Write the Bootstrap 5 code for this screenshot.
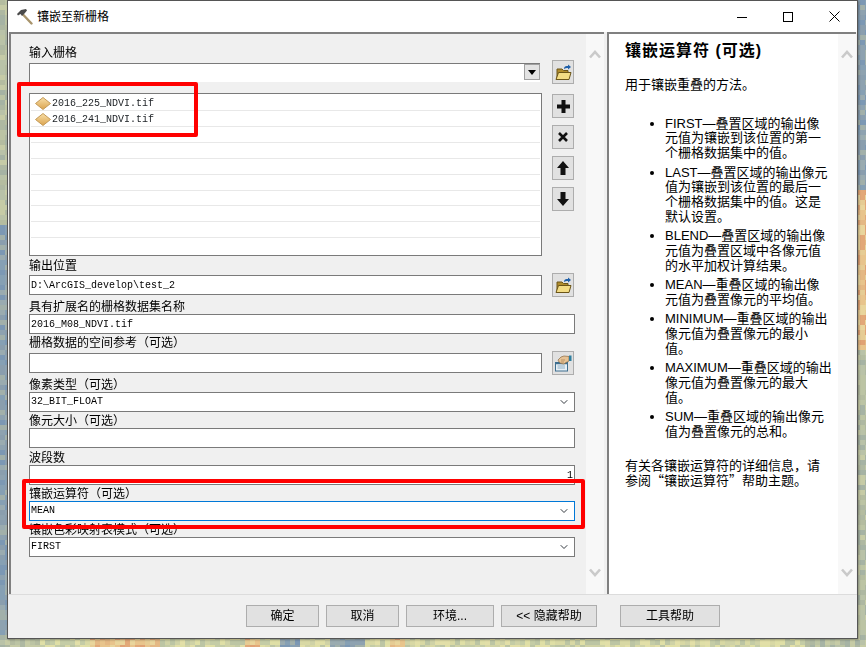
<!DOCTYPE html>
<html lang="zh-CN">
<head>
    <meta charset="UTF-8">
    <meta name="viewport" content="width=device-width, initial-scale=1.0">
    <title>镶嵌至新栅格</title>
    <link href="https://cdn.jsdelivr.net/npm/bootstrap@5.3.0/dist/css/bootstrap.min.css" rel="stylesheet">
    <style>
        body {
            margin: 0;
            height: 647px;
            overflow: hidden;
            background-color: #a9b3a0;
            font-family: "Liberation Sans", "Noto Sans CJK SC", sans-serif;
            font-size: 12px;
            color: #000;
        }
        #desktop {
            position: absolute;
            left: 0;
            top: 0;
        }
        .tool-window {
            position: absolute;
            left: 7px;
            top: 0;
            width: 851px;
            height: 639px;
            background-color: #f0f0f0;
            border: 1px solid #555;
            box-shadow: 1px 1px 2px rgba(0,0,0,0.3);
        }
        .title-bar {
            height: 31px;
            background-color: #fff;
            padding-left: 8px;
        }
        .title-text {
            margin-left: 4px;
            font-size: 12px;
        }
        .caption-btn {
            width: 46px;
            height: 31px;
        }
        .panes {
            height: 563px;
            padding-left: 1px;
            border-bottom: 1px solid #dcdcdc;
        }
        .form-pane {
            width: 595px;
            border-left: 2px solid #808080;
            border-top: 2px solid #808080;
        }
        .help-pane {
            width: 249px;
            margin-left: 3px;
            border-left: 2px solid #808080;
            border-top: 2px solid #808080;
            background-color: #fff;
        }
        .form-body {
            width: 546px;
            margin-left: 18px;
            padding-top: 12px;
        }
        .scroll-strip {
            width: 18px;
            background-color: #f8f8f8;
            padding: 16px 0 17px;
        }
        .field-label {
            height: 14px;
            line-height: 15px;
            white-space: nowrap;
        }
        .field-gap {
            margin-top: 2px;
        }
        .field-gap-wide {
            margin-top: 3px;
        }
        .row-drop {
            margin-top: 1px;
        }
        .form-control.field-box,
        .form-select.field-box {
            height: 20px;
            min-height: 0;
            padding: 0 1px;
            border-radius: 0;
            border-color: #7a7a7a;
            font-family: "Liberation Mono", monospace;
            font-size: 10px;
            line-height: 18px;
            color: #000;
            box-shadow: none;
        }
        .form-select.field-box {
            background-position: right 5px center;
            background-size: 10px 8px;
        }
        .form-select.field-active {
            border-color: #0078d7;
        }
        .combo-box {
            height: 19px;
            width: 511px;
            margin-top: 3px;
            background-color: #fff;
            border-top: 1px solid #7a7a7a;
            border-left: 1px solid #7a7a7a;
        }
        .combo-arrow {
            width: 16px;
            height: 16px;
            background-color: #e3e3e3;
            border: 1px solid #a0a0a0;
        }
        .combo-arrow::after {
            content: "";
            border-left: 4px solid transparent;
            border-right: 4px solid transparent;
            border-top: 5px solid #000;
        }
        .input-col {
            width: 513px;
        }
        .icon-btn {
            width: 22px;
            height: 24px;
            margin-right: 1px;
            padding: 0;
            border-radius: 0;
            border: 1px solid #adadad;
            background-color: #e1e1e1;
        }
        .list-row-gap {
            margin-top: 9px;
        }
        .raster-list {
            width: 513px;
            height: 163px;
            padding: 1px;
            background-color: #fff;
            border: 1px solid #7a7a7a;
            border-radius: 0;
        }
        .raster-list .list-group-item {
            height: 16px;
            padding: 1px 0 0 4px;
            border-width: 0 0 1px;
            border-color: #e8e8e8;
            border-radius: 0;
            font-family: "Liberation Mono", monospace;
            font-size: 10px;
            line-height: 15px;
        }
        .raster-icon {
            margin-right: 1px;
        }
        .side-btns {
            gap: 7px;
            margin-top: 1px;
        }
        .foot-bar {
            height: 43px;
            padding: 10px 0 0 238px;
        }
        .foot-btn {
            height: 22px;
            padding: 0;
            border-radius: 0;
            border: 1px solid #adadad;
            background-color: #e1e1e1;
            font-size: 12px;
            line-height: 20px;
            color: #000;
        }
        .w-ok { width: 73px; margin-right: 7px; }
        .w-env { width: 88px; margin-right: 7px; }
        .w-hide { width: 96px; margin-right: 23px; }
        .w-help { width: 100px; }
        .help-body {
            width: 229px;
            padding: 7px 0 0 16px;
            font-size: 13px;
            line-height: 14.7px;
        }
        .help-title {
            font-size: 16px;
            font-weight: 700;
            letter-spacing: 1px;
            line-height: 20px;
            margin: 0 0 17px;
            white-space: nowrap;
        }
        .help-body p {
            margin: 0;
            white-space: nowrap;
        }
        .help-body ul {
            margin: 24px 0 19px;
            padding-left: 40px;
            white-space: nowrap;
        }
        .help-body li {
            margin-bottom: 4.8px;
        }
        .cjk-quote {
            font-family: "Noto Sans CJK SC", sans-serif;
        }
        .red-mark {
            position: absolute;
            border: 4px solid #ff0000;
            border-radius: 2px;
            pointer-events: none;
        }
        .mark-list {
            left: 9px;
            top: 81px;
            width: 181px;
            height: 55px;
        }
        .mark-mosaic {
            left: 14px;
            top: 478px;
            width: 563px;
            height: 50px;
        }
    </style>
</head>
<body>
    <canvas id="desktop" width="866" height="647"></canvas>

    <div class="tool-window d-flex flex-column">
        <div class="title-bar d-flex align-items-center">
            <svg width="17" height="17" viewBox="0 0 17 17">
                <path d="M7 6.5 L15.5 15.5" stroke="#a8946c" stroke-width="2.4" stroke-linecap="round"/>
                <path d="M1 6 L5 2 L10 1 L11 2.5 L8.5 5.5 L6 8 L4.5 6 L2 7.5 Z" fill="#4a4a4a"/>
            </svg>
            <span class="title-text">镶嵌至新栅格</span>
            <div class="ms-auto d-flex">
                <span class="caption-btn d-flex align-items-center justify-content-center">
                    <svg width="10" height="10" viewBox="0 0 10 10"><path d="M0 5.5 H10" stroke="#000"/></svg>
                </span>
                <span class="caption-btn d-flex align-items-center justify-content-center">
                    <svg width="10" height="10" viewBox="0 0 10 10"><rect x="0.5" y="0.5" width="9" height="9" fill="none" stroke="#000"/></svg>
                </span>
                <span class="caption-btn d-flex align-items-center justify-content-center">
                    <svg width="11" height="11" viewBox="0 0 11 11"><path d="M0.5 0.5 L10.5 10.5 M10.5 0.5 L0.5 10.5" stroke="#000"/></svg>
                </span>
            </div>
        </div>

        <div class="panes d-flex">
            <div class="form-pane d-flex justify-content-between">
                <form class="form-body">
                    <div class="field-label">输入栅格</div>
                    <div class="d-flex justify-content-between">
                        <div class="combo-box d-flex justify-content-end">
                            <span class="combo-arrow d-flex align-items-center justify-content-center"></span>
                        </div>
                        <button type="button" class="btn icon-btn d-flex align-items-center justify-content-center">
                            <svg width="17" height="17" viewBox="0 0 17 17"><use href="#folder"/></svg>
                        </button>
                    </div>

                    <div class="d-flex justify-content-between list-row-gap">
                        <ul class="list-group raster-list">
                            <li class="list-group-item d-flex align-items-center"><svg class="raster-icon" width="16" height="13" viewBox="0 0 16 13"><use href="#diamond"/></svg>2016_225_NDVI.tif</li>
                            <li class="list-group-item d-flex align-items-center"><svg class="raster-icon" width="16" height="13" viewBox="0 0 16 13"><use href="#diamond"/></svg>2016_241_NDVI.tif</li>
                            <li class="list-group-item"></li>
                            <li class="list-group-item"></li>
                            <li class="list-group-item"></li>
                            <li class="list-group-item"></li>
                            <li class="list-group-item"></li>
                            <li class="list-group-item"></li>
                            <li class="list-group-item"></li>
                            <li class="list-group-item border-0"></li>
                        </ul>
                        <div class="side-btns d-flex flex-column">
                            <button type="button" class="btn icon-btn d-flex align-items-center justify-content-center">
                                <svg width="15" height="15" viewBox="0 0 15 15"><path d="M5.5 1 H9.5 V5.5 H14 V9.5 H9.5 V14 H5.5 V9.5 H1 V5.5 H5.5 Z" fill="#111"/></svg>
                            </button>
                            <button type="button" class="btn icon-btn d-flex align-items-center justify-content-center">
                                <svg width="12" height="12" viewBox="0 0 12 12"><path d="M2 2 L10 10 M10 2 L2 10" stroke="#111" stroke-width="2.6"/></svg>
                            </button>
                            <button type="button" class="btn icon-btn d-flex align-items-center justify-content-center">
                                <svg width="14" height="16" viewBox="0 0 14 16"><path d="M7 1 L13 8 H9.5 V15 H4.5 V8 H1 Z" fill="#111"/></svg>
                            </button>
                            <button type="button" class="btn icon-btn d-flex align-items-center justify-content-center">
                                <svg width="14" height="16" viewBox="0 0 14 16"><path d="M7 15 L13 8 H9.5 V1 H4.5 V8 H1 Z" fill="#111"/></svg>
                            </button>
                        </div>
                    </div>

                    <div class="field-label field-gap-wide">输出位置</div>
                    <div class="d-flex justify-content-between align-items-center">
                        <div class="input-col"><input class="form-control field-box" type="text" value="D:\ArcGIS_develop\test_2"></div>
                        <button type="button" class="btn icon-btn d-flex align-items-center justify-content-center">
                            <svg width="17" height="17" viewBox="0 0 17 17"><use href="#folder"/></svg>
                        </button>
                    </div>

                    <div class="field-label field-gap-wide">具有扩展名的栅格数据集名称</div>
                    <input class="form-control field-box" type="text" value="2016_M08_NDVI.tif">

                    <div class="field-label field-gap">栅格数据的空间参考（可选）</div>
                    <div class="d-flex justify-content-between align-items-center row-drop">
                        <div class="input-col"><input class="form-control field-box" type="text"></div>
                        <button type="button" class="btn icon-btn d-flex align-items-center justify-content-center">
                            <svg width="18" height="18" viewBox="0 0 18 18">
                                <rect x="1.5" y="8.5" width="12" height="8.5" fill="#e8f0f6" stroke="#3f6f8f"/>
                                <path d="M2 9.5 H13" stroke="#3f6f8f" stroke-width="1.5"/>
                                <path d="M3.5 12 H11 M3.5 14 H11" stroke="#8fb0c6"/>
                                <path d="M4 6 L7 3 L10 2 L15 2.5 V7 L12 8.5 L10 10 L7 9.5 L5 8 Z" fill="#e6c295" stroke="#8b6a42" stroke-width="0.7"/>
                                <path d="M7 6 L11 6 M7 8 L10 8" stroke="#a57f50" stroke-width="0.7"/>
                                <rect x="15" y="1.5" width="2.5" height="5.5" fill="#2f7f9f"/>
                            </svg>
                        </button>
                    </div>

                    <div class="field-label field-gap-wide">像素类型（可选）</div>
                    <select class="form-select field-box"><option>32_BIT_FLOAT</option></select>

                    <div class="field-label field-gap">像元大小（可选）</div>
                    <input class="form-control field-box" type="text">

                    <div class="field-label field-gap-wide">波段数</div>
                    <input class="form-control field-box text-end" type="text" value="1">

                    <div class="field-label field-gap">镶嵌运算符（可选）</div>
                    <select class="form-select field-box field-active"><option>MEAN</option></select>

                    <div class="field-label field-gap">镶嵌色彩映射表模式（可选）</div>
                    <select class="form-select field-box"><option>FIRST</option></select>
                </form>
                <div class="scroll-strip d-flex flex-column justify-content-between align-items-center">
                    <svg width="12" height="9" viewBox="0 0 12 9"><use href="#chev-up"/></svg>
                    <svg width="12" height="9" viewBox="0 0 12 9"><use href="#chev-down"/></svg>
                </div>
            </div>

            <div class="help-pane d-flex justify-content-between">
                <div class="help-body">
                    <h1 class="help-title">镶嵌运算符 (可选)</h1>
                    <p>用于镶嵌重叠的方法。</p>
                    <ul>
                        <li>FIRST—叠置区域的输出像<br>元值为镶嵌到该位置的第一<br>个栅格数据集中的值。</li>
                        <li>LAST—叠置区域的输出像元<br>值为镶嵌到该位置的最后一<br>个栅格数据集中的值。这是<br>默认设置。</li>
                        <li>BLEND—叠置区域的输出像<br>元值为叠置区域中各像元值<br>的水平加权计算结果。</li>
                        <li>MEAN—重叠区域的输出像<br>元值为叠置像元的平均值。</li>
                        <li>MINIMUM—重叠区域的输出<br>像元值为叠置像元的最小<br>值。</li>
                        <li>MAXIMUM—重叠区域的输出<br>像元值为叠置像元的最大<br>值。</li>
                        <li>SUM—重叠区域的输出像元<br>值为叠置像元的总和。</li>
                    </ul>
                    <p>有关各镶嵌运算符的详细信息，请<br>参阅<span class="cjk-quote">“镶嵌运算符”</span>帮助主题。</p>
                </div>
                <div class="scroll-strip d-flex flex-column justify-content-between align-items-center">
                    <svg width="12" height="9" viewBox="0 0 12 9"><use href="#chev-up"/></svg>
                    <svg width="12" height="9" viewBox="0 0 12 9"><use href="#chev-down"/></svg>
                </div>
            </div>
        </div>

        <div class="foot-bar d-flex">
            <button type="button" class="btn foot-btn w-ok">确定</button>
            <button type="button" class="btn foot-btn w-ok">取消</button>
            <button type="button" class="btn foot-btn w-env">环境...</button>
            <button type="button" class="btn foot-btn w-hide">&lt;&lt; 隐藏帮助</button>
            <button type="button" class="btn foot-btn w-help">工具帮助</button>
        </div>

        <div class="red-mark mark-list"></div>
        <div class="red-mark mark-mosaic"></div>
    </div>

    <!-- shared icons -->
    <svg width="0" height="0" class="position-absolute">
        <defs>
            <linearGradient id="diamondFill" x1="0" y1="0" x2="0" y2="1">
                <stop offset="0" stop-color="#f8dfa8"/>
                <stop offset="1" stop-color="#dba34e"/>
            </linearGradient>
            <g id="diamond">
                <path d="M8 0.5 L15.5 6.5 L8 12.5 L0.5 6.5 Z" fill="url(#diamondFill)" stroke="#c49a58"/>
            </g>
            <g id="folder">
                <path d="M2 15 V5 H7 L8.5 6.5 H13 V15 Z" fill="#b08c2c" stroke="#6b5518"/>
                <path d="M1 15.5 L3.5 8.5 H16 L14 15.5 Z" fill="#f3dc84" stroke="#6b5518"/>
                <path d="M9 4 C10 2 11 2 13 2 V0.5 L16 3 L13 5.5 V4 C11.5 4 10 4 9 5 Z" fill="#1f5fa8"/>
            </g>
            <path id="chev-up" d="M1 7.5 L6 2 L11 7.5" fill="none" stroke="#cacaca" stroke-width="2.6"/>
            <path id="chev-down" d="M1 1.5 L6 7 L11 1.5" fill="none" stroke="#cacaca" stroke-width="2.6"/>
        </defs>
    </svg>

    <script>
        // map raster behind the dialog: pick a colour per 5px cell, by region
        const ctx = document.getElementById('desktop').getContext('2d');
        const grayGreen = ['#b4bca0', '#aeb8a2', '#bcc4a4', '#a6b3a4', '#b9c2a8', '#c6cba6'];
        const blueGray = ['#8ea2b0', '#8a9eae', '#9aabb0', '#86a0b4', '#7c98b4', '#a2b0aa'];
        const orange = ['#e2a878', '#e8c48c', '#e0a274', '#e9d59c', '#e4b884', '#e6cc94'];
        const yellow = ['#dfdfa6', '#cfd2a6', '#e2dfa8', '#c4cca6', '#d8d8a4', '#bcc5a4'];
        let seed = 41;

        function nextRandom() {
            seed = (seed * 16807) % 2147483647;
            return seed / 2147483647;
        }

        function paletteFor(x, y) {
            if (y > 630) {
                if ((x > 275 && x < 298) || (x > 326 && x < 365)) return blueGray;
                if ((x > 85 && x < 160) || (x > 240 && x < 260) || (x > 385 && x < 405)) return orange;
                return x < 40 || x > 800 ? grayGreen : yellow;
            }
            if (x < 20) return y > 220 ? blueGray : grayGreen;
            if (y < 190) return blueGray;
            if (y < 350) return orange;
            return grayGreen;
        }

        for (let y = 0; y < 647; y += 5) {
            for (let x = 0; x < 866; x += 5) {
                const palette = paletteFor(x, y);
                ctx.fillStyle = palette[Math.floor(nextRandom() * palette.length)];
                ctx.fillRect(x, y, 5, 5);
            }
        }
    </script>
    <script src="https://cdn.jsdelivr.net/npm/bootstrap@5.3.0/dist/js/bootstrap.bundle.min.js"></script>
</body>
</html>
